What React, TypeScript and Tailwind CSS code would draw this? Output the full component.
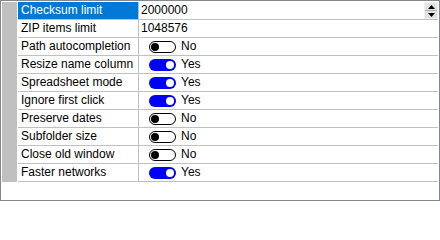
import React from "react"

type Row = {
    name: string
    value: string | boolean
    selected?: boolean
    spinner?: boolean
}

const rows: Row[] = [
    { name: "Checksum limit", value: "2000000", selected: true, spinner: true },
    { name: "ZIP items limit", value: "1048576" },
    { name: "Path autocompletion", value: false },
    { name: "Resize name column", value: true },
    { name: "Spreadsheet mode", value: true },
    { name: "Ignore first click", value: true },
    { name: "Preserve dates", value: false },
    { name: "Subfolder size", value: false },
    { name: "Close old window", value: false },
    { name: "Faster networks", value: true },
]

function Toggle({ on }: { on: boolean }) {
    if (on) {
        return (
            <div className="flex items-center justify-end w-[27px] h-[12px] rounded-full bg-[#0000ff] pr-[2px]">
                <div className="w-[8px] h-[8px] rounded-full bg-white" />
            </div>
        )
    }
    return (
        <div className="flex items-center w-[27px] h-[12px] rounded-full bg-white border border-black pl-[1px]">
            <div className="w-[8px] h-[8px] rounded-full bg-black" />
        </div>
    )
}

function Spinner() {
    return (
        <div className="flex flex-col w-[14px] h-[17px] bg-[#e3e3e3] border border-[#f0f0f0]">
            <div className="flex-1 flex items-center justify-center border-b border-[#b0b0b0]">
                <svg width="7" height="4" viewBox="0 0 7 4">
                    <path d="M3.5 0 L7 4 L0 4 Z" fill="#000" />
                </svg>
            </div>
            <div className="flex-1 flex items-center justify-center">
                <svg width="7" height="4" viewBox="0 0 7 4">
                    <path d="M0 0 L7 0 L3.5 4 Z" fill="#000" />
                </svg>
            </div>
        </div>
    )
}

export default function App() {
    return (
        <div
            className="w-[440px] h-[201px] bg-white border border-[#828790] p-px text-[12px] text-black"
            style={{ fontFamily: '"Liberation Sans", Arial, sans-serif' }}
        >
            <div className="flex flex-col">
                {rows.map(function (row) {
                    return (
                        <div key={row.name} className="flex h-[18px]">
                            <div className="w-[15px] bg-[#c0c0c0]" />
                            <div className="w-px" />
                            <div
                                className={
                                    row.selected
                                        ? "w-[121px] border-r border-b border-[#c0c0c0] bg-[#0078d7] text-white pl-[3px] leading-[17px] whitespace-nowrap"
                                        : "w-[121px] border-r border-b border-[#c0c0c0] pl-[3px] leading-[17px] whitespace-nowrap"
                                }
                            >
                                {row.name}
                            </div>
                            <div className="w-[299px] flex items-center border-b border-[#c0c0c0]">
                                {typeof row.value === "string" ? (
                                    <div className="flex-1 pl-[2px] leading-[17px]">{row.value}</div>
                                ) : (
                                    <div className="flex items-center gap-[5px] pl-[10px]">
                                        <Toggle on={row.value} />
                                        <span className="leading-[17px]">{row.value ? "Yes" : "No"}</span>
                                    </div>
                                )}
                                {row.spinner ? <Spinner /> : null}
                            </div>
                        </div>
                    )
                })}
            </div>
        </div>
    )
}
